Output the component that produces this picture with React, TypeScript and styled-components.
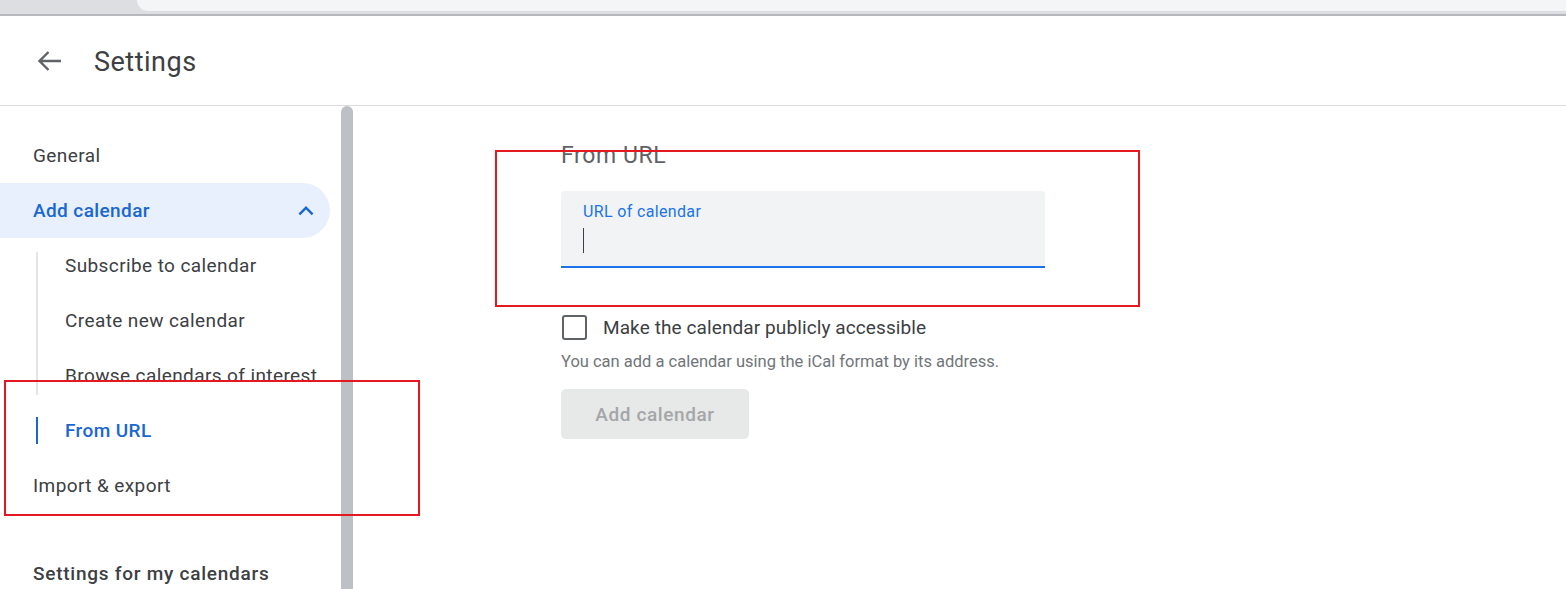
import * as React from 'react';
import styled, { createGlobalStyle } from 'styled-components';

const GlobalStyle = createGlobalStyle`
  html, body {
    margin: 0;
    padding: 0;
    background: #ffffff;
    font-family: Roboto, "Noto Sans", Arial, sans-serif;
    overflow: hidden;
  }
  * { box-sizing: border-box; }
`;

const Page = styled.div`
  position: relative;
  width: 1566px;
  height: 589px;
  display: flex;
  flex-direction: column;
  overflow: hidden;
`;

const TabStrip = styled.div`
  height: 16px;
  flex-shrink: 0;
  background: #dcdee2;
  border-bottom: 2px solid #b7b8bf;
  display: flex;
  padding-left: 137px;
`;

const Tab = styled.div`
  flex: 1;
  height: 11px;
  background: #f4f5f7;
  border-bottom-left-radius: 11px;
`;

const Header = styled.header`
  height: 90px;
  flex-shrink: 0;
  display: flex;
  align-items: center;
  padding-left: 37px;
  gap: 32px;
  border-bottom: 1px solid #dadce0;
`;

const BackButton = styled.button`
  border: 0;
  background: none;
  padding: 0;
  width: 25px;
  height: 22px;
  display: flex;
  align-items: center;
  color: #5f6368;
`;

const Title = styled.h1`
  margin: 2px 0 0;
  font-size: 27px;
  font-weight: 400;
  color: #3c4043;
  letter-spacing: 0.5px;
`;

const Body = styled.div`
  flex: 1;
  display: flex;
  min-height: 0;
`;

const Nav = styled.nav`
  width: 341px;
  flex-shrink: 0;
  padding-top: 22px;
  display: flex;
  flex-direction: column;
`;

const NavItem = styled.div<{ $active?: boolean; $heading?: boolean }>`
  height: 55px;
  flex-shrink: 0;
  margin-right: 11px;
  display: flex;
  align-items: center;
  justify-content: space-between;
  padding: 0 9px 0 33px;
  font-size: 19px;
  letter-spacing: ${(p) => (p.$heading ? '0.75px' : '0.4px')};
  font-weight: ${(p) => (p.$active || p.$heading ? 500 : 400)};
  color: ${(p) => (p.$active ? '#1967d2' : '#3c4043')};
  background: ${(p) => (p.$active ? '#e8f0fe' : 'transparent')};
  border-radius: 0 28px 28px 0;
  margin-top: ${(p) => (p.$heading ? '33px' : '0')};
  white-space: nowrap;
`;

const SubItem = styled.div<{ $active?: boolean }>`
  height: 55px;
  flex-shrink: 0;
  display: flex;
  align-items: center;
  padding-left: 36px;
  gap: 27px;
  font-size: 19px;
  letter-spacing: 0.4px;
  font-weight: ${(p) => (p.$active ? 500 : 400)};
  color: ${(p) => (p.$active ? '#1967d2' : '#3c4043')};
  white-space: nowrap;
`;

const Rail = styled.span<{ $tone: 'gray' | 'blue'; $top: number; $bottom: number }>`
  width: 2px;
  align-self: stretch;
  margin: ${(p) => p.$top}px 0 ${(p) => p.$bottom}px;
  background: ${(p) => (p.$tone === 'blue' ? '#1967d2' : '#e3e4ea')};
  flex-shrink: 0;
`;

const Scrollbar = styled.div`
  width: 12px;
  flex-shrink: 0;
  background: #bdc1c6;
  border-radius: 6px 6px 0 0;
`;

const Main = styled.main`
  flex: 1;
  padding: 35px 0 0 208px;
  display: flex;
  flex-direction: column;
  align-items: flex-start;
`;

const SectionTitle = styled.h2`
  margin: 0;
  font-size: 23px;
  line-height: 30px;
  font-weight: 400;
  letter-spacing: 0.6px;
  color: #5f6368;
`;

const Field = styled.div`
  margin-top: 20px;
  width: 484px;
  height: 77px;
  background: #f1f3f4;
  border-radius: 4px 4px 0 0;
  border-bottom: 2px solid #1a73e8;
  padding: 11px 22px 0;
  display: flex;
  flex-direction: column;
`;

const FieldLabel = styled.label`
  font-size: 16px;
  line-height: 20px;
  letter-spacing: 0.35px;
  color: #1a73e8;
`;

const Caret = styled.span`
  margin-top: 6px;
  width: 1px;
  height: 25px;
  background: #3c4043;
`;

const CheckRow = styled.label`
  margin-top: 47px;
  display: flex;
  align-items: center;
  gap: 16px;
  font-size: 19px;
  letter-spacing: 0.1px;
  color: #3c4043;
`;

const CheckBox = styled.span`
  width: 25px;
  height: 25px;
  border: 2px solid #5f6368;
  border-radius: 3px;
  margin-left: 1px;
`;

const Helper = styled.p`
  margin: 12px 0 0;
  font-size: 16.5px;
  line-height: 20px;
  color: #70757a;
`;

const PrimaryButton = styled.button`
  margin-top: 17px;
  width: 188px;
  height: 50px;
  border: 0;
  border-radius: 5px;
  background: #e7e8e8;
  color: #a4a6a8;
  font-family: inherit;
  font-size: 19px;
  font-weight: 500;
  letter-spacing: 0.6px;
`;

const Annotation = styled.div<{ $x: number; $y: number; $w: number; $h: number }>`
  position: absolute;
  left: ${(p) => p.$x}px;
  top: ${(p) => p.$y}px;
  width: ${(p) => p.$w}px;
  height: ${(p) => p.$h}px;
  border: 2px solid #e3191f;
  pointer-events: none;
`;

const BackArrow = () => (
  <svg width="25" height="22" viewBox="0 0 25 22" fill="none">
    <path d="M24 11H2.5M11.5 2L2.5 11l9 9" stroke="currentColor" strokeWidth="2.4" />
  </svg>
);

const ChevronUp = () => (
  <svg width="30" height="30" viewBox="0 0 24 24" fill="#1967d2">
    <path d="M7.41 15.41L12 10.83l4.59 4.58L18 14l-6-6-6 6z" />
  </svg>
);

const App: React.FC = () => (
  <>
    <GlobalStyle />
    <Page>
      <TabStrip>
        <Tab />
      </TabStrip>
      <Header>
        <BackButton aria-label="Back">
          <BackArrow />
        </BackButton>
        <Title>Settings</Title>
      </Header>
      <Body>
        <Nav>
          <NavItem>General</NavItem>
          <NavItem $active>
            Add calendar
            <ChevronUp />
          </NavItem>
          <SubItem>
            <Rail $tone="gray" $top={14} $bottom={0} />
            Subscribe to calendar
          </SubItem>
          <SubItem>
            <Rail $tone="gray" $top={0} $bottom={0} />
            Create new calendar
          </SubItem>
          <SubItem>
            <Rail $tone="gray" $top={0} $bottom={8} />
            Browse calendars of interest
          </SubItem>
          <SubItem $active>
            <Rail $tone="blue" $top={14} $bottom={14} />
            From URL
          </SubItem>
          <NavItem>Import &amp; export</NavItem>
          <NavItem $heading>Settings for my calendars</NavItem>
        </Nav>
        <Scrollbar />
        <Main>
          <SectionTitle>From URL</SectionTitle>
          <Field>
            <FieldLabel>URL of calendar</FieldLabel>
            <Caret />
          </Field>
          <CheckRow>
            <CheckBox />
            Make the calendar publicly accessible
          </CheckRow>
          <Helper>You can add a calendar using the iCal format by its address.</Helper>
          <PrimaryButton disabled>Add calendar</PrimaryButton>
        </Main>
      </Body>
      <Annotation $x={495} $y={150} $w={645} $h={157} />
      <Annotation $x={4} $y={380} $w={416} $h={136} />
    </Page>
  </>
);

export default App;
